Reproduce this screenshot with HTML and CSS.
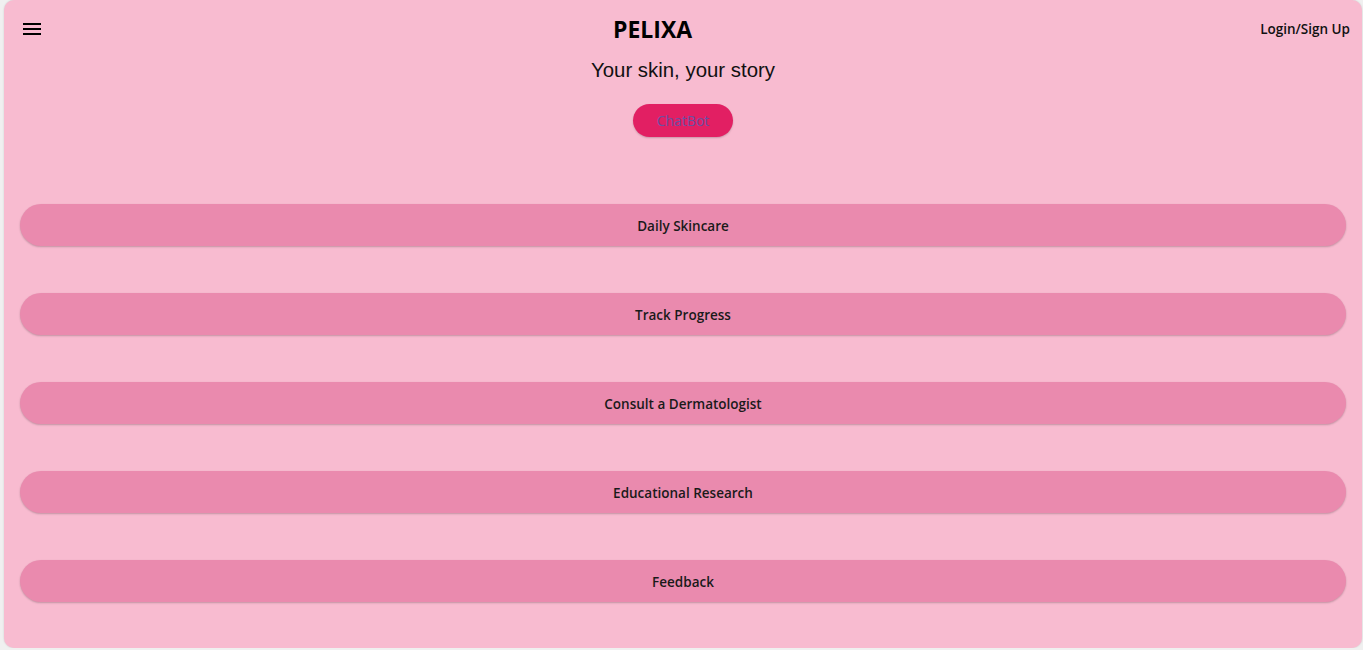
FILE: index.html
```html
<!DOCTYPE html>
<html lang="en">
<head>
<meta charset="utf-8">
<title>PELIXA</title>
<link rel="stylesheet" href="styles.css">
</head>
<body>
<div class="app">
  <header class="topbar">
    <button class="menu-btn" aria-label="Menu">
      <svg width="18" height="12" viewBox="0 0 18 12"><rect x="0" y="0" width="18" height="2" fill="#000"/><rect x="0" y="5" width="18" height="2" fill="#000"/><rect x="0" y="10" width="18" height="2" fill="#000"/></svg>
    </button>
    <h1 class="brand">PELIXA</h1>
    <a class="login" href="#">Login/Sign Up</a>
  </header>
  <p class="tagline">Your skin, your story</p>
  <div class="chat-wrap"><button class="chatbot">ChatBot</button></div>
  <nav class="options">
    <button class="option">Daily Skincare</button>
    <button class="option">Track Progress</button>
    <button class="option">Consult a Dermatologist</button>
    <button class="option">Educational Research</button>
    <button class="option">Feedback</button>
  </nav>
</div>
</body>
</html>
```

FILE: styles.css
```css
html, body {
  margin: 0;
  padding: 0;
  background: #f0f0f0;
  font-family: "Open Sans", "Noto Sans", sans-serif;
}
.app {
  margin: 0 1px 0 4px;
  height: 648px;
  box-sizing: border-box;
  background: #f8bbd0;
  border-radius: 10px;
  padding: 0 16px;
  box-shadow: 0 0 2px rgba(0,0,0,0.15);
}
.topbar {
  display: flex;
  align-items: center;
  justify-content: space-between;
  height: 58px;
  margin-right: -4px;
  margin-left: 3px;
}
.menu-btn {
  border: 0;
  background: none;
  padding: 0;
  display: flex;
  width: 18px;
  height: 12px;
}
.brand {
  margin: 0 0 0 4px;
  font-family: "Open Sans", sans-serif;
  font-weight: 700;
  font-size: 23px;
  color: #000;
}
.login {
  color: #111;
  text-decoration: none;
  font-size: 13.5px;
  font-weight: 600;
  margin-top: -1px;
}
.tagline {
  margin: 0;
  text-align: center;
  font-family: "Liberation Sans", Arial, sans-serif;
  font-size: 20.4px;
  line-height: 24px;
  color: #111;
}
.chat-wrap {
  display: flex;
  justify-content: center;
  margin-top: 22px;
}
.chatbot {
  width: 100px;
  height: 33px;
  border: 0;
  border-radius: 17px;
  background: #e21f63;
  color: #6b4fa3;
  font-family: "Open Sans", sans-serif;
  font-size: 14px;
  box-shadow: 0 1px 2px rgba(0,0,0,0.2);
}
.options {
  display: flex;
  flex-direction: column;
  gap: 47px;
  margin-top: 67px;
}
.option {
  height: 42px;
  border: 0;
  border-radius: 21px;
  background: #ea8aae;
  color: #1a1a1a;
  font-family: "Open Sans", sans-serif;
  font-size: 13.5px;
  font-weight: 600;
  padding-top: 2px;
  box-shadow: 0 1px 2px rgba(0,0,0,0.22);
}
```
